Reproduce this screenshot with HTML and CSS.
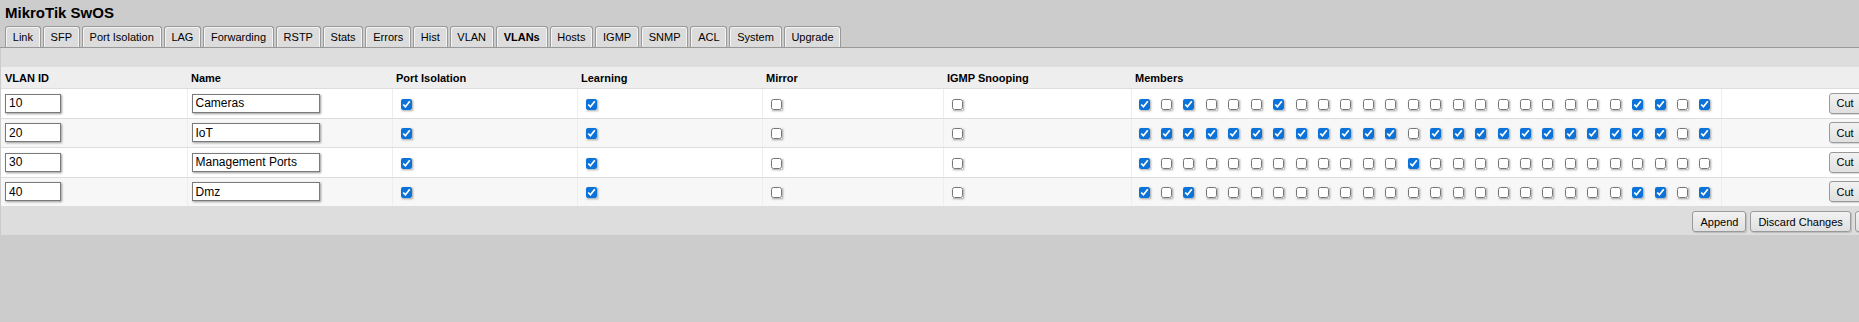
FILE: index.html
```html
<!DOCTYPE html>
<html>
<head>
<meta charset="utf-8">
<title>MikroTik SwOS</title>
<link rel="stylesheet" href="styles.css">
</head>
<body>
<div class="page">
  <div class="title">MikroTik SwOS</div>
  <nav class="tabs">
    <span class="tab">Link</span><span class="tab">SFP</span><span class="tab">Port Isolation</span><span class="tab">LAG</span><span class="tab">Forwarding</span><span class="tab">RSTP</span><span class="tab">Stats</span><span class="tab">Errors</span><span class="tab">Hist</span><span class="tab">VLAN</span><span class="tab active">VLANs</span><span class="tab">Hosts</span><span class="tab">IGMP</span><span class="tab">SNMP</span><span class="tab">ACL</span><span class="tab">System</span><span class="tab">Upgrade</span>
  </nav>
  <div class="panel">
    <div class="spacer"></div>
    <table class="vlans">
      <colgroup>
        <col class="c-id"><col class="c-name"><col class="c-iso"><col class="c-learn"><col class="c-mirror"><col class="c-igmp"><col class="c-members"><col class="c-action">
      </colgroup>
      <thead>
        <tr><th>VLAN ID</th><th>Name</th><th>Port Isolation</th><th>Learning</th><th>Mirror</th><th>IGMP Snooping</th><th>Members</th><th></th></tr>
      </thead>
      <tbody>
        <tr>
          <td><input class="in-id" type="text" value="10"></td>
          <td><input class="in-name" type="text" value="Cameras"></td>
          <td><input class="cb" type="checkbox" checked></td>
          <td><input class="cb" type="checkbox" checked></td>
          <td><input class="cb" type="checkbox"></td>
          <td><input class="cb" type="checkbox"></td>
          <td class="members"><input class="cb" type="checkbox" checked><input class="cb" type="checkbox"><input class="cb" type="checkbox" checked><input class="cb" type="checkbox"><input class="cb" type="checkbox"><input class="cb" type="checkbox"><input class="cb" type="checkbox" checked><input class="cb" type="checkbox"><input class="cb" type="checkbox"><input class="cb" type="checkbox"><input class="cb" type="checkbox"><input class="cb" type="checkbox"><input class="cb" type="checkbox"><input class="cb" type="checkbox"><input class="cb" type="checkbox"><input class="cb" type="checkbox"><input class="cb" type="checkbox"><input class="cb" type="checkbox"><input class="cb" type="checkbox"><input class="cb" type="checkbox"><input class="cb" type="checkbox"><input class="cb" type="checkbox"><input class="cb" type="checkbox" checked><input class="cb" type="checkbox" checked><input class="cb" type="checkbox"><input class="cb" type="checkbox" checked></td>
          <td class="action"><button class="btn">Cut</button></td>
        </tr>
        <tr>
          <td><input class="in-id" type="text" value="20"></td>
          <td><input class="in-name" type="text" value="IoT"></td>
          <td><input class="cb" type="checkbox" checked></td>
          <td><input class="cb" type="checkbox" checked></td>
          <td><input class="cb" type="checkbox"></td>
          <td><input class="cb" type="checkbox"></td>
          <td class="members"><input class="cb" type="checkbox" checked><input class="cb" type="checkbox" checked><input class="cb" type="checkbox" checked><input class="cb" type="checkbox" checked><input class="cb" type="checkbox" checked><input class="cb" type="checkbox" checked><input class="cb" type="checkbox" checked><input class="cb" type="checkbox" checked><input class="cb" type="checkbox" checked><input class="cb" type="checkbox" checked><input class="cb" type="checkbox" checked><input class="cb" type="checkbox" checked><input class="cb" type="checkbox"><input class="cb" type="checkbox" checked><input class="cb" type="checkbox" checked><input class="cb" type="checkbox" checked><input class="cb" type="checkbox" checked><input class="cb" type="checkbox" checked><input class="cb" type="checkbox" checked><input class="cb" type="checkbox" checked><input class="cb" type="checkbox" checked><input class="cb" type="checkbox" checked><input class="cb" type="checkbox" checked><input class="cb" type="checkbox" checked><input class="cb" type="checkbox"><input class="cb" type="checkbox" checked></td>
          <td class="action"><button class="btn">Cut</button></td>
        </tr>
        <tr>
          <td><input class="in-id" type="text" value="30"></td>
          <td><input class="in-name" type="text" value="Management Ports"></td>
          <td><input class="cb" type="checkbox" checked></td>
          <td><input class="cb" type="checkbox" checked></td>
          <td><input class="cb" type="checkbox"></td>
          <td><input class="cb" type="checkbox"></td>
          <td class="members"><input class="cb" type="checkbox" checked><input class="cb" type="checkbox"><input class="cb" type="checkbox"><input class="cb" type="checkbox"><input class="cb" type="checkbox"><input class="cb" type="checkbox"><input class="cb" type="checkbox"><input class="cb" type="checkbox"><input class="cb" type="checkbox"><input class="cb" type="checkbox"><input class="cb" type="checkbox"><input class="cb" type="checkbox"><input class="cb" type="checkbox" checked><input class="cb" type="checkbox"><input class="cb" type="checkbox"><input class="cb" type="checkbox"><input class="cb" type="checkbox"><input class="cb" type="checkbox"><input class="cb" type="checkbox"><input class="cb" type="checkbox"><input class="cb" type="checkbox"><input class="cb" type="checkbox"><input class="cb" type="checkbox"><input class="cb" type="checkbox"><input class="cb" type="checkbox"><input class="cb" type="checkbox"></td>
          <td class="action"><button class="btn">Cut</button></td>
        </tr>
        <tr>
          <td><input class="in-id" type="text" value="40"></td>
          <td><input class="in-name" type="text" value="Dmz"></td>
          <td><input class="cb" type="checkbox" checked></td>
          <td><input class="cb" type="checkbox" checked></td>
          <td><input class="cb" type="checkbox"></td>
          <td><input class="cb" type="checkbox"></td>
          <td class="members"><input class="cb" type="checkbox" checked><input class="cb" type="checkbox"><input class="cb" type="checkbox" checked><input class="cb" type="checkbox"><input class="cb" type="checkbox"><input class="cb" type="checkbox"><input class="cb" type="checkbox"><input class="cb" type="checkbox"><input class="cb" type="checkbox"><input class="cb" type="checkbox"><input class="cb" type="checkbox"><input class="cb" type="checkbox"><input class="cb" type="checkbox"><input class="cb" type="checkbox"><input class="cb" type="checkbox"><input class="cb" type="checkbox"><input class="cb" type="checkbox"><input class="cb" type="checkbox"><input class="cb" type="checkbox"><input class="cb" type="checkbox"><input class="cb" type="checkbox"><input class="cb" type="checkbox"><input class="cb" type="checkbox" checked><input class="cb" type="checkbox" checked><input class="cb" type="checkbox"><input class="cb" type="checkbox" checked></td>
          <td class="action"><button class="btn">Cut</button></td>
        </tr>
      </tbody>
    </table>
    <div class="footer">
      <button class="btn">Append</button>
      <button class="btn">Discard Changes</button>
      <button class="btn">Apply All</button>
    </div>
  </div>
</div>
</body>
</html>
```

FILE: styles.css
```css
html, body {
  margin: 0;
  padding: 0;
  background: #cccccc;
  overflow: hidden;
}
body {
  font-family: "Liberation Sans", Arial, sans-serif;
  color: #000;
}
.page {
  width: 1923px;
}
.title {
  font-size: 15px;
  font-weight: bold;
  line-height: 20px;
  padding: 3px 0 0 5px;
  height: 23px;
  box-sizing: border-box;
}
.tabs {
  display: flex;
  gap: 2px;
  padding: 3px 0 0 5px;
  border-bottom: 1px solid #999;
  height: 21px;
}
.tab {
  display: block;
  font-size: 11px;
  line-height: 20px;
  padding: 0 6.8px;
  background: #dcdcdc;
  border: 1px solid #999;
  border-bottom: none;
  border-radius: 3px 3px 0 0;
  box-shadow: inset 1px 1px 0 #f4f4f4, inset -1px 0 0 #f4f4f4;
}
.tab.active {
  font-weight: bold;
  background: #dddddd;
}
.panel {
  margin-left: 1px;
  background: #dddddd;
}
.spacer {
  height: 19px;
}
.vlans {
  border-collapse: collapse;
  table-layout: fixed;
  width: 1922px;
}
.c-id { width: 186px; }
.c-name { width: 205px; }
.c-iso { width: 185px; }
.c-learn { width: 185px; }
.c-mirror { width: 181px; }
.c-igmp { width: 188px; }
.c-members { width: 590px; }
.c-action { width: 202px; }

.vlans th {
  background: #eeeeee;
  font-size: 11px;
  font-weight: bold;
  text-align: left;
  padding: 0 4px;
  height: 21px;
  border-bottom: 1px solid #dddddd;
}
.vlans td {
  padding: 0 4px;
  height: 28.5px;
  border-bottom: 1px solid #dddddd;
  border-left: 1px solid #eeeeee;
  vertical-align: middle;
  background: #ffffff;
}
.vlans td:first-child {
  border-left: none;
}
.vlans tbody tr:nth-child(even) td {
  background: #f7f7f7;
}
.in-id, .in-name {
  font-family: "Liberation Sans", Arial, sans-serif;
  font-size: 12px;
  height: 19px;
  box-sizing: border-box;
  padding: 0 3px;
  border: 1px solid #7a7a7a;
  box-shadow: 1px 1px 2px #9a9a9a;
  background: #fff;
  outline: none;
  display: block;
}
.in-id { width: 56px; }
.in-name { width: 128px; }
.cb {
  width: 11px;
  height: 11px;
  margin: 0 0 0 4px;
  vertical-align: middle;
  accent-color: #0a72d8;
  box-shadow: 1px 1px 2px rgba(0,0,0,0.35);
  border-radius: 2px;
}
.members {
  white-space: nowrap;
}
.members .cb {
  margin: 0 11.44px 0 0;
}
.members .cb:first-child {
  margin-left: 3px;
}
.action {
  padding-left: 107px !important;
}
.btn {
  font-family: "Liberation Sans", Arial, sans-serif;
  font-size: 11px;
  height: 21px;
  padding: 0 7px;
  border: 1px solid #9a9a9a;
  border-radius: 3px;
  background: linear-gradient(#f2f2f2, #e0e0e0);
  box-shadow: 1px 1px 1px rgba(0,0,0,0.15);
  color: #000;
}
.footer {
  display: flex;
  justify-content: flex-end;
  gap: 4px;
  padding: 4px 10px 3px 0;
  height: 28px;
  box-sizing: border-box;
}
```
